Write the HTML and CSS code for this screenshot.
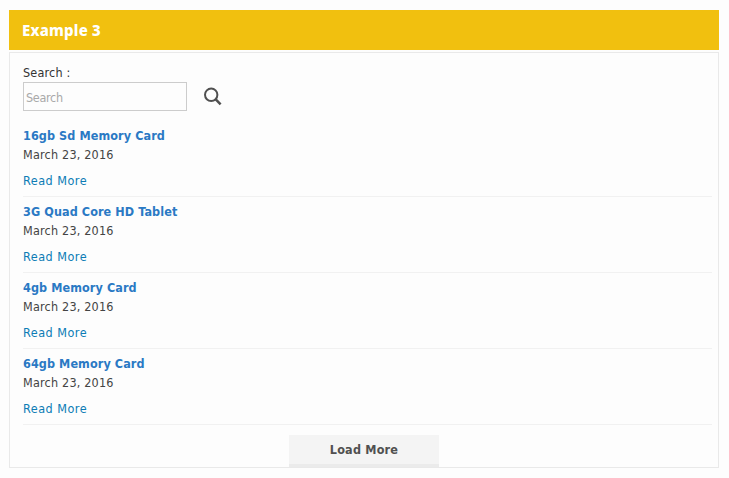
FILE: index.html
```html
<!DOCTYPE html>
<html lang="en">
<head>
<meta charset="utf-8">
<title>Example 3</title>
<link rel="stylesheet" href="styles.css">
</head>
<body>
<h1 class="heading"><span>Example 3</span></h1>
<main class="panel">
  <form class="search">
    <label class="label" for="q">Search :</label>
    <div class="search-row">
      <input class="input" id="q" type="text" placeholder="Search">
      <svg class="icon" width="20" height="20" viewBox="0 0 20 20" fill="none" stroke="#505050" stroke-width="2"><circle cx="8.2" cy="7.8" r="6.2"/><path d="M12.5 12.1L17.6 17.4" stroke-width="2.5"/></svg>
    </div>
  </form>
  <article class="item"><h2 class="title"><span>16gb Sd Memory Card</span></h2><p class="date">March 23, 2016</p><a class="more">Read More</a></article>
  <article class="item"><h2 class="title"><span>3G Quad Core HD Tablet</span></h2><p class="date">March 23, 2016</p><a class="more">Read More</a></article>
  <article class="item"><h2 class="title"><span>4gb Memory Card</span></h2><p class="date">March 23, 2016</p><a class="more">Read More</a></article>
  <article class="item"><h2 class="title"><span>64gb Memory Card</span></h2><p class="date">March 23, 2016</p><a class="more">Read More</a></article>
  <button class="load" type="button">Load More</button>
</main>
</body>
</html>
```
FILE: styles.css
```css
* { box-sizing: border-box; }
body {
  margin: 0;
  padding: 10px 10px 0 9px;
  background: #fdfdfd;
  color: #444;
  font: 12.5px/19px "DejaVu Sans Condensed", "DejaVu Sans", sans-serif;
  font-stretch: condensed;
  letter-spacing: 0.2px;
}
.heading {
  margin: 0 0 2px;
  height: 40px;
  padding-left: 13px;
  background: #f1c00f;
  color: #fff;
  font: 800 15px/40px "Noto Sans", sans-serif;
  letter-spacing: 0.2px;
}
.panel {
  height: 416px;
  padding: 10px 6px 0 13px;
  border: 1px solid #e9e9e9;
  display: flex;
  flex-direction: column;
}
.search { height: 58px; flex-shrink: 0; }
.label { display: block; color: #333; }
.search-row { display: flex; align-items: center; gap: 16px; height: 29px; }
.input {
  width: 164px;
  height: 29px;
  padding: 2px 2px 0;
  border: 1px solid #ccc;
  background: #fdfdfd;
  font: inherit;
  letter-spacing: -0.3px;
}
.input::placeholder { color: #a9a9a9; opacity: 1; }
.icon { display: block; }
.item { height: 76px; flex-shrink: 0; padding-top: 5px; border-bottom: 1px solid #f1f1f1; }
.title { margin: 0; font-size: 12.5px; line-height: 19px; letter-spacing: 0.09px; color: #2a79c4; }
.date { margin: 0 0 7px; line-height: 19px; }
.more { display: block; letter-spacing: 0.5px; color: #0c7cb5; }
.load {
  width: 150px;
  height: 32px;
  margin: 10px 0 0 266px;
  padding: 0;
  border: 0;
  border-bottom: 3px solid #ebebeb;
  background: #f4f4f4;
  color: #505050;
  font: inherit;
  font-weight: bold;
  letter-spacing: 0.2px;
}
```
